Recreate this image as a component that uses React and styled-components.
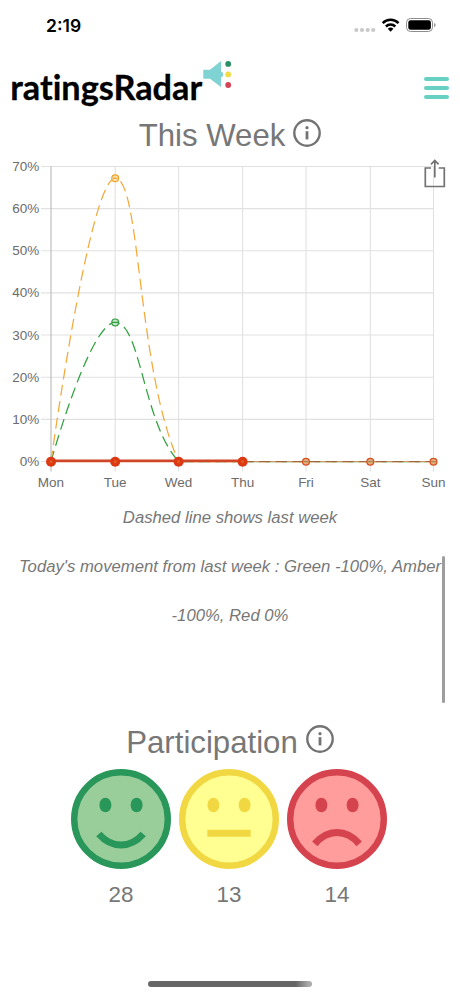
import React from "react";
import styled, { createGlobalStyle } from "styled-components";

const GlobalStyle = createGlobalStyle`
  * {
    box-sizing: border-box;
  }

  body {
    margin: 0;
    background: #fff;
    font-family: "Liberation Sans", Arial, sans-serif;
    color: #777;
  }
`;

const Screen = styled.div`
  position: relative;
  display: flex;
  flex-direction: column;
  width: 460px;
  height: 996px;
  overflow: hidden;
  background: #fff;
`;

const StatusBar = styled.div`
  display: flex;
  justify-content: space-between;
  align-items: center;
  height: 50px;
  padding: 0 23px 0 46px;
`;

const Time = styled.div`
  font-family: Inter, sans-serif;
  font-size: 17.5px;
  font-weight: 600;
  line-height: 20px;
  color: #000;
  padding-top: 2px;
`;

const HeaderDiv = styled.header`
  display: flex;
  justify-content: space-between;
  height: 64px;
  padding: 0 11px 0 8px;
`;

const LogoText = styled.text`
  font-family: Lato, sans-serif;
  font-size: 34.5px;
  font-weight: 700;
  font-variant-ligatures: none;
  fill: #000;
  stroke: #000;
  stroke-width: 0.3px;
`;

const MenuBtn = styled.button`
  display: flex;
  flex-direction: column;
  gap: 5px;
  width: 25px;
  margin: 27px 0 0;
  padding: 0;
  border: 0;
  background: none;
  cursor: pointer;
`;

const MenuLine = styled.span`
  height: 4px;
  border-radius: 3px;
  background: #66d0c3;
`;

const SectionTitle = styled.h1`
  display: flex;
  justify-content: center;
  align-items: flex-start;
  gap: 8px;
  height: ${(props) => props.$height}px;
  margin: 0;
  font-size: 31.2px;
  font-weight: 400;
  line-height: ${(props) => props.$lineHeight || 44}px;
`;

const InfoIcon = styled.svg`
  width: 28px;
  height: 28px;
  margin-top: 4.5px;
`;

const ChartDiv = styled.div`
  position: relative;
  height: 341px;
`;

const AxisText = styled.text`
  font-family: "Liberation Sans", Arial, sans-serif;
  font-size: 13.5px;
  fill: #6c6c6c;
`;

const ShareBtn = styled.button`
  position: absolute;
  top: 6px;
  left: 423px;
  padding: 0;
  border: 0;
  background: none;
  cursor: pointer;
`;

const Caption = styled.p`
  margin: 0;
  padding: 0 16px;
  font-size: 16.7px;
  font-style: italic;
  line-height: 49px;
  text-align: center;
`;

const Participation = styled.section`
  margin-top: 80px;
`;

const Faces = styled.div`
  display: flex;
  justify-content: center;
  gap: 8px;
  padding-right: 2px;
`;

const Face = styled.div`
  display: flex;
  flex-direction: column;
  align-items: center;
  width: 100px;
`;

const Count = styled.div`
  font-size: 22.4px;
  line-height: 51px;
`;

const ScrollThumb = styled.div`
  position: absolute;
  top: 556px;
  left: 442px;
  width: 3.4px;
  height: 147px;
  border-radius: 2px;
  background: #9d9d9d;
`;

const HomeIndicator = styled.div`
  position: absolute;
  bottom: 9px;
  left: 148px;
  width: 164px;
  height: 6px;
  border-radius: 3px;
  background: linear-gradient(90deg, #666 0, #666 90%, #aaa 98%);
`;

const DAYS = ["Mon", "Tue", "Wed", "Thu", "Fri", "Sat", "Sun"];
const GRID_X = [51, 115.2, 178.6, 242.6, 306, 370.3, 433.5];
const TICKS = [70, 60, 50, 40, 30, 20, 10, 0];
const BASE = 309.5;

const toY = (percent) => BASE - percent * 4.215;

// rises from Monday, peaks on Tuesday and settles back to zero on Wednesday
const peakPath = (percent, tension) => {
  const y = toY(percent);
  const cx = GRID_X[2] - tension * 127.4;
  const cy = BASE - tension * (BASE - y);
  return `M51 ${BASE} C51 ${BASE} 89.7 ${y} 115.2 ${y} C140.7 ${y} ${cx} ${cy} 178.6 ${BASE} H433.5`;
};

function StatusIcons() {
  return (
    <svg width="84" height="20" viewBox="0 0 84 20">
      <g fill="#c9c9c9">
        <circle cx="3.3" cy="15" r="2.1" />
        <circle cx="9" cy="15" r="2.1" />
        <circle cx="14.7" cy="15" r="2.1" />
        <circle cx="20.2" cy="15" r="2.1" />
      </g>
      <g fill="none" stroke="#000" strokeWidth="2.5">
        <path d="M29.7 8.1a11.2 11.2 0 0 1 15.8 0" />
        <path d="M32.9 11.5a6.7 6.7 0 0 1 9.4 0" />
      </g>
      <path d="M34.8 13.7a4.1 4.1 0 0 1 5.6 0l-2.8 3z" fill="#000" />
      <rect x="53.5" y="3.5" width="26" height="13" rx="4" fill="none" stroke="#8d8d8d" />
      <rect x="55.3" y="5.3" width="22.6" height="9.5" rx="2.3" fill="#000" />
      <path d="M81.1 8v4.2q1.5-.6 1.5-2.1T81.1 8z" fill="#8d8d8d" />
    </svg>
  );
}

function Logo() {
  return (
    <svg width="230" height="63" viewBox="0 0 230 63">
      <LogoText x="2.2" y="50" textLength="192" lengthAdjust="spacingAndGlyphs">
        ratingsRadar
      </LogoText>
      <path d="M195.3 19.7h6.7l11-8.6v26l-11-8.4h-6.7z" fill="#7fd3d2" />
      <circle cx="212.2" cy="24.4" r="2.9" fill="#7fd3d2" />
      <circle cx="220.2" cy="13.9" r="2.9" fill="#289166" />
      <circle cx="220.2" cy="24.4" r="2.9" fill="#f0dc45" />
      <circle cx="220.2" cy="35" r="2.9" fill="#d34555" />
    </svg>
  );
}

function Info() {
  return (
    <InfoIcon viewBox="0 0 28 28">
      <circle cx="14" cy="14" r="12.7" fill="none" stroke="#737373" strokeWidth="2.4" />
      <circle cx="14" cy="8.7" r="1.6" fill="#737373" />
      <path d="M14 12.2v8.2" stroke="#737373" strokeWidth="2.8" />
    </InfoIcon>
  );
}

function WeekChart() {
  return (
    <svg width="460" height="340" viewBox="0 0 460 340">
      {TICKS.map((tick) => (
        <g key={tick}>
          <path d={`M41 ${toY(tick)}H433.5`} stroke="#e1e1e1" strokeWidth="1.1" />
          <AxisText x="39.2" y={toY(tick) + 4.5} textAnchor="end">
            {tick}%
          </AxisText>
        </g>
      ))}
      {DAYS.map((day, i) => (
        <g key={day}>
          <path
            d={`M${GRID_X[i]} 14.5V319.5`}
            stroke={i === 0 ? "#b8b8b8" : "#e1e1e1"}
            strokeWidth="1.1"
          />
          <AxisText x={GRID_X[i]} y="334.5" textAnchor="middle">
            {day}
          </AxisText>
        </g>
      ))}

      <g fill="none" strokeWidth="1.25">
        <path d={peakPath(33, 0.282)} stroke="#31a13e" strokeDasharray="11.1 5.55" />
        <path d={peakPath(67.2, 0.328)} stroke="#f2a93b" strokeDasharray="11.1 5.55" />
        <path d={`M242.6 ${BASE}H433.5`} stroke="#cf9664" strokeWidth="1.2" />
        <path d={`M242.6 ${BASE}H433.5`} stroke="#a0683f" strokeDasharray="11.1 5.55" />
      </g>
      <g fill="none" strokeWidth="1.2">
        <circle cx="115.2" cy={toY(67.2)} r="3.4" stroke="#f0a22c" fill="#f9dfb2" />
        <path d={`M113 ${toY(67.2)}h4`} stroke="#f0a22c" />
        <circle cx="115.2" cy={toY(33)} r="3.4" stroke="#2f9e3d" fill="#c5e3c9" />
        <path d={`M112 ${toY(33)}h6.4`} stroke="#2f9e3d" />
      </g>

      <path d={`M51 ${BASE - 0.6}H242.6`} stroke="#cf4526" strokeWidth="2.6" />
      {GRID_X.map((x, i) =>
        i < 4 ? (
          <g key={x}>
            <circle cx={x} cy={BASE + 0.2} r="5" fill="#dc3813" />
            <circle cx={x} cy={BASE + 0.2} r="1.6" fill="#dc5b20" />
          </g>
        ) : (
          <g key={x}>
            <circle cx={x} cy={BASE + 0.2} r="3.4" fill="#dfb17b" stroke="#d94e22" strokeWidth="1.3" />
            <path d={`M${x - 2.3} ${BASE + 0.2}h4.6`} stroke="#a9764d" />
          </g>
        )
      )}
    </svg>
  );
}

const FACES = [
  {
    color: "#29965a",
    fill: "#99cd9a",
    mouth: "M27.8 65Q37.5 76 50 76T72.2 65",
    count: 28,
  },
  { color: "#f1d843", fill: "#ffff92", mouth: "M28.3 64.3H71.7", count: 13 },
  {
    color: "#d5434e",
    fill: "#ff9c9c",
    mouth: "M27.8 74.9Q37.5 63.6 50 63.6T72.2 74.9",
    count: 14,
  },
];

function FaceIcon({ color, fill, mouth }) {
  return (
    <svg width="100" height="100" viewBox="0 0 100 100">
      <circle cx="50" cy="50" r="46.8" fill={fill} stroke={color} strokeWidth="6.4" />
      <ellipse cx="34.4" cy="36" rx="6" ry="7.3" fill={color} />
      <ellipse cx="65.6" cy="36" rx="6" ry="7.3" fill={color} />
      <path d={mouth} fill="none" stroke={color} strokeWidth="7" />
    </svg>
  );
}

function App() {
  return (
    <>
      <GlobalStyle />
      <Screen>
        <StatusBar>
          <Time>2:19</Time>
          <StatusIcons />
        </StatusBar>
        <HeaderDiv>
          <Logo />
          <MenuBtn aria-label="Menu">
            <MenuLine />
            <MenuLine />
            <MenuLine />
          </MenuBtn>
        </HeaderDiv>

        <SectionTitle $height={38}>
          This Week <Info />
        </SectionTitle>
        <ChartDiv>
          <WeekChart />
          <ShareBtn aria-label="Share">
            <svg width="24" height="31" viewBox="0 0 24 31" fill="none" stroke="#727272" strokeWidth="1.7">
              <path d="M8 10H2.3v18.5h19V10h-5.6M11.8 19.5V3M8 6.3l3.8-3.9 3.8 3.9" />
            </svg>
          </ShareBtn>
        </ChartDiv>
        <Caption>Dashed line shows last week</Caption>
        <Caption>
          Today's movement from last week : Green -100%, Amber -100%, Red 0%
        </Caption>

        <Participation>
          <SectionTitle $height={49} $lineHeight={46}>
            Participation <Info />
          </SectionTitle>
          <Faces>
            {FACES.map((face) => (
              <Face key={face.count}>
                <FaceIcon {...face} />
                <Count>{face.count}</Count>
              </Face>
            ))}
          </Faces>
        </Participation>

        <ScrollThumb />
        <HomeIndicator />
      </Screen>
    </>
  );
}

export default App;
